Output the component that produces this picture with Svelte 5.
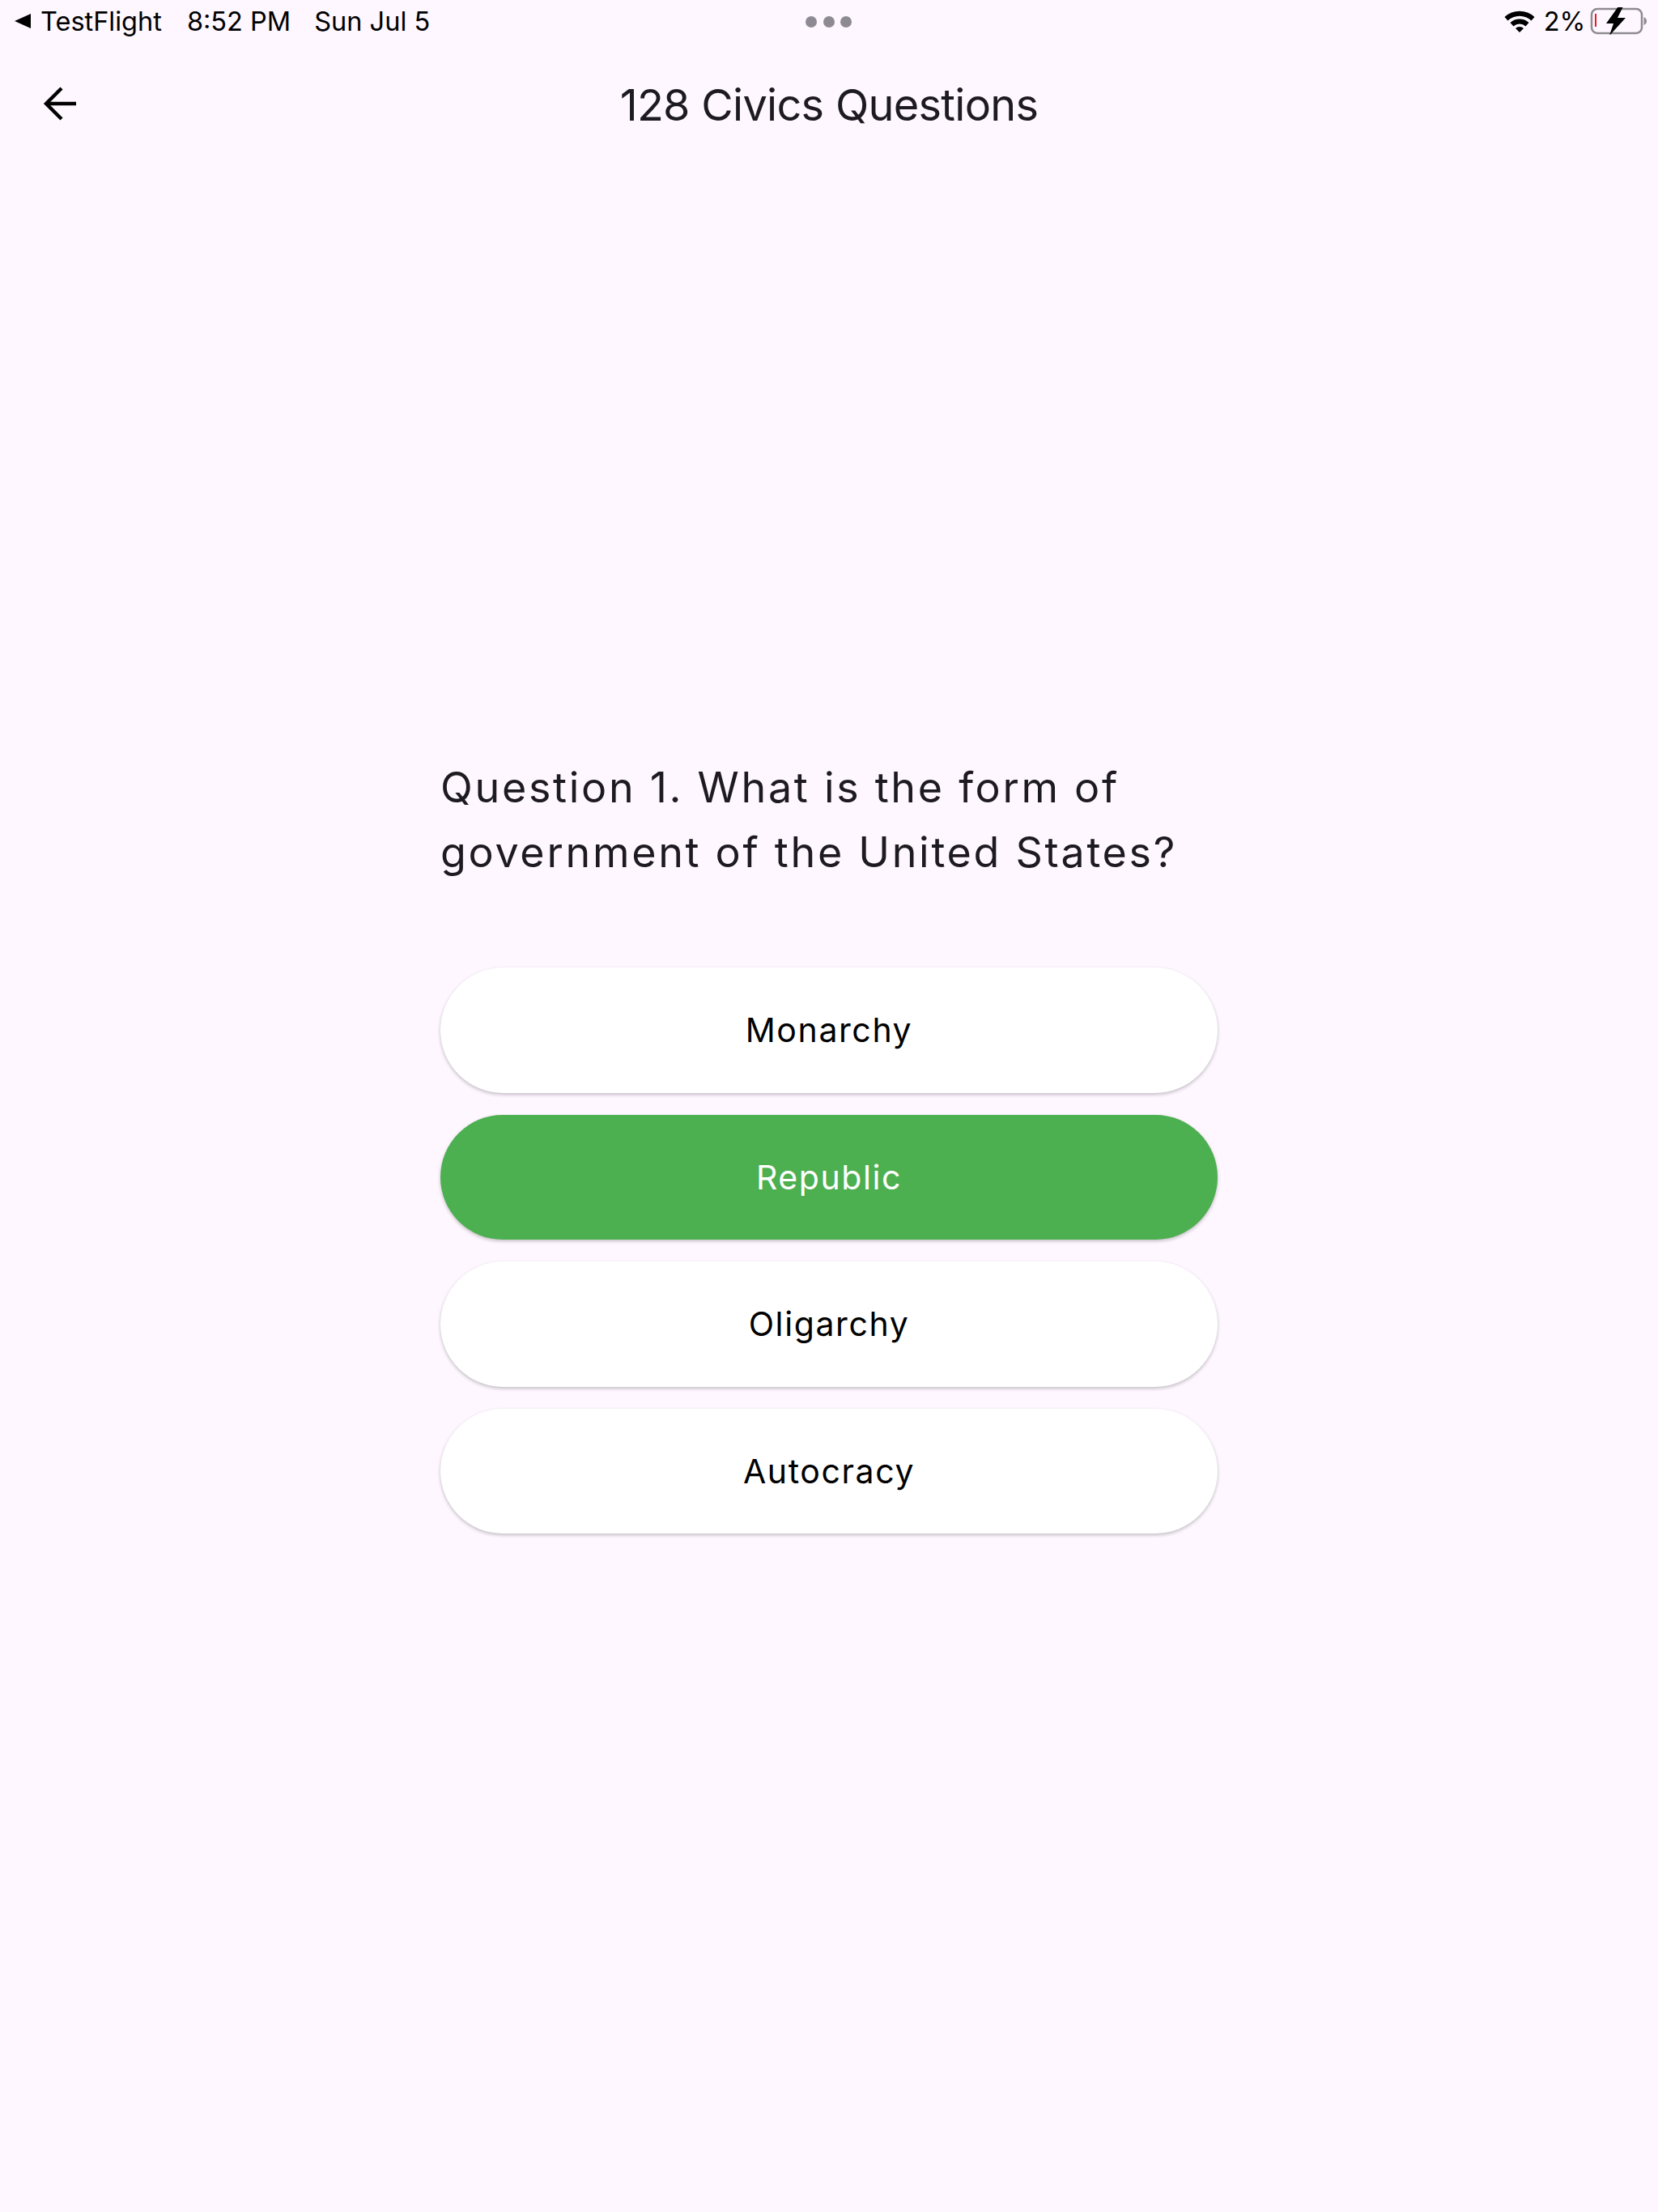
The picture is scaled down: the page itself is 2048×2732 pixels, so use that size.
<script>
  const answers = [
    { label: 'Monarchy', correct: false },
    { label: 'Republic', correct: true },
    { label: 'Oligarchy', correct: false },
    { label: 'Autocracy', correct: false }
  ];
</script>

<div class="page">
  <header class="status">
    <div class="status-left">
      <svg class="back-tri" viewBox="0 0 20 18" width="20" height="18"><path d="M0 9 L20 0 V18 Z" fill="#000" /></svg>
      <span>TestFlight</span>
      <span class="time">8:52 PM</span>
      <span class="date">Sun Jul 5</span>
    </div>
    <div class="dots"><i></i><i></i><i></i></div>
    <div class="status-right">
      <svg class="wifi" viewBox="0 0 38 28" width="38" height="28">
        <path d="M0.500 9 A27 27 0 0 1 37.500 9 L33.500 13.500 A21 21 0 0 0 4.500 13.500 Z" fill="#000" />
        <path d="M7.500 16 A17 17 0 0 1 30.500 16 L26.500 20.500 A11 11 0 0 0 11.500 20.500 Z" fill="#000" />
        <path d="M14 23 A7 7 0 0 1 24 23 L19 28 Z" fill="#000" />
      </svg>
      <span class="pct">2%</span>
      <svg class="battery" viewBox="0 0 70 34" width="70" height="34">
        <rect x="2" y="2" width="62" height="30" rx="7" fill="none" stroke="#8e8b90" stroke-width="2.500" />
        <rect x="6" y="8" width="2" height="16" fill="#f0141e" />
        <path d="M66.500 12 C69 13 70 15 70 17 C70 19 69 21 66.500 22 Z" fill="#8e8b90" />
        <path d="M35 -1 L20 20 H29 L24 35 L44 13 H34 L41 -1 Z" fill="#000" />
      </svg>
    </div>
  </header>

  <nav class="appbar">
    <button class="back" aria-label="Back">
      <svg viewBox="0 0 44 44" width="44" height="44" fill="none" stroke="#000" stroke-width="4.400">
        <path d="M42 22 H6" />
        <path d="M24 3 L5 22 L24 41" />
      </svg>
    </button>
    <h1>128 Civics Questions</h1>
  </nav>

  <main class="quiz">
    <p class="question">Question 1. What is the form of government of the United States?</p>
    <div class="answers">
      {#each answers as a}
        <button class="answer" class:correct={a.correct}>{a.label}</button>
      {/each}
    </div>
  </main>
</div>

<style>
  :global(body) {
    margin: 0;
    background: #fef7ff;
  }
  .page {
    width: 2048px;
    height: 2732px;
    background: #fef7ff;
    font-family: Inter, "Liberation Sans", sans-serif;
    color: #000;
    display: flex;
    flex-direction: column;
    overflow: hidden;
  }
  .status {
    height: 52px;
    position: relative;
    display: flex;
    align-items: center;
    justify-content: space-between;
    padding: 0 14px 0 18px;
    font-size: 32.500px;
    box-sizing: border-box;
  }
  .status-left {
    display: flex;
    align-items: center;
  }
  .back-tri {
    margin-right: 12px;
  }
  .time {
    margin-left: 31px;
  }
  .date {
    margin-left: 29px;
  }
  .dots {
    position: absolute;
    left: 995px;
    top: 20px;
    display: flex;
    gap: 7.500px;
  }
  .dots i {
    width: 14px;
    height: 14px;
    border-radius: 50%;
    background: #8e8a93;
  }
  .status-right {
    display: flex;
    align-items: center;
  }
  .pct {
    margin: 0 5.500px 0 10.500px;
  }
  .appbar {
    height: 154px;
    position: relative;
    display: flex;
    align-items: center;
    justify-content: center;
  }
  .back {
    position: absolute;
    left: 52px;
    top: 54px;
    padding: 0;
    border: 0;
    background: none;
    line-height: 0;
  }
  h1 {
    margin: 0;
    font-size: 54px;
    font-weight: 400;
    letter-spacing: -0.700px;
    color: #1d1b20;
  }
  .quiz {
    width: 960px;
    margin: 0 auto;
    padding-top: 727px;
  }
  .question {
    margin: 0 0 102px;
    font-size: 52px;
    line-height: 80px;
    letter-spacing: 2.700px;
    color: #1d1b20;
  }
  .answers {
    display: flex;
    flex-direction: column;
    gap: 27px;
  }
  .answer {
    height: 154.500px;
    border: 0;
    border-radius: 78px;
    background: #fff;
    color: #000;
    font-family: inherit;
    font-size: 41px;
    letter-spacing: 1.600px;
    padding: 0;
    box-shadow: 0 2px 4px rgba(0, 0, 0, 0.24);
  }
  .answer.correct {
    background: #4caf50;
    color: #fff;
  }
</style>
